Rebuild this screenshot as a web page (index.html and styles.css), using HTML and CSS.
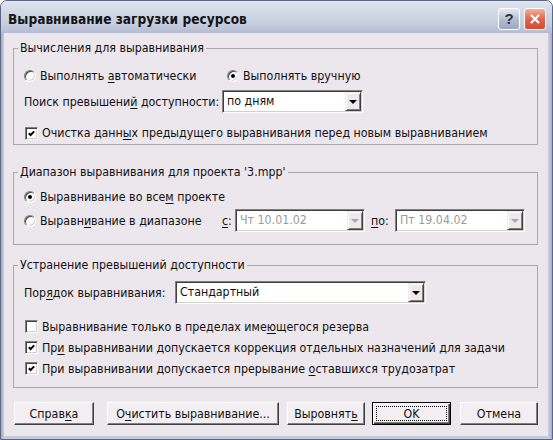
FILE: index.html
```html
<!DOCTYPE html>
<html>
<head>
  <meta charset="utf-8">
  <link rel="stylesheet" href="styles.css">
</head>
<body>
  <div class="window">
    <!-- Caption -->
    <div class="titlebar">
      <span class="title">Выравнивание загрузки ресурсов</span>
      <span class="cap-btn help">?</span>
      <span class="cap-btn close">
        <svg viewBox="0 0 12 12"><path d="M2 2l8 8M10 2l-8 8"/></svg>
      </span>
    </div>

    <div class="client">
      <!-- Calculation mode -->
      <fieldset class="group calc">
        <legend>Вычисления для выравнивания</legend>
        <div class="row line radios">
          <label class="opt opt-auto"><span class="radio"></span><span>Выполнять <u>а</u>втоматически</span></label>
          <label class="opt"><span class="radio on"></span><span>Выполнять в<u>р</u>учную</span></label>
        </div>
        <div class="row field search">
          <span class="lbl lbl-search">Поиск превышени<u>й</u> доступности:</span>
          <div class="combo combo-days">
            <span class="val">по дням</span>
            <span class="drop"><i></i></span>
          </div>
        </div>
        <div class="row line clear">
          <span class="checkbox on"><svg viewBox="0 0 7 7"><path d="M0.8 3.2l1.8 1.8 3.6-3.6"/></svg></span>
          <span>Очистка данн<u>ы</u>х предыдущего выравнивания перед новым выравниванием</span>
        </div>
      </fieldset>

      <!-- Project range -->
      <fieldset class="group range">
        <legend>Диапазон выравнивания для проекта '3.mpp'</legend>
        <div class="row line whole">
          <label class="opt"><span class="radio on"></span><span>Выравнивание во все<u>м</u> проекте</span></label>
        </div>
        <div class="row field dates">
          <label class="opt opt-range"><span class="radio"></span><span>Выравн<u>и</u>вание в диапазоне</span></label>
          <span class="lbl lbl-from"><u>с</u>:</span>
          <div class="combo combo-date disabled">
            <span class="val">Чт 10.01.02</span>
            <span class="drop"><i></i></span>
          </div>
          <span class="lbl lbl-to"><u>п</u>о:</span>
          <div class="combo combo-date disabled">
            <span class="val">Пт 19.04.02</span>
            <span class="drop"><i></i></span>
          </div>
        </div>
      </fieldset>

      <!-- Resolving overallocations -->
      <fieldset class="group resolve">
        <legend>Устранение превышений доступности</legend>
        <div class="row field order">
          <span class="lbl lbl-order">Пор<u>я</u>док выравнивания:</span>
          <div class="combo combo-order">
            <span class="val">Стандартный</span>
            <span class="drop"><i></i></span>
          </div>
        </div>
        <div class="row item first">
          <span class="checkbox"></span>
          <span>Выравнивание только в пределах име<u>ю</u>щегося резерва</span>
        </div>
        <div class="row item">
          <span class="checkbox on"><svg viewBox="0 0 7 7"><path d="M0.8 3.2l1.8 1.8 3.6-3.6"/></svg></span>
          <span>Пр<u>и</u> выравнивании допускается коррекция отдельных назначений для задачи</span>
        </div>
        <div class="row item">
          <span class="checkbox on"><svg viewBox="0 0 7 7"><path d="M0.8 3.2l1.8 1.8 3.6-3.6"/></svg></span>
          <span>При выравнивании допускается прерывание <u>о</u>ставшихся трудозатрат</span>
        </div>
      </fieldset>

      <div class="buttons">
        <button class="btn btn-help">Справ<u>к</u>а</button>
        <button class="btn btn-clear">О<u>ч</u>истить выравнивание...</button>
        <button class="btn btn-level">Выровнят<u>ь</u></button>
        <button class="btn btn-ok default">OK</button>
        <button class="btn btn-cancel">Отмена</button>
      </div>
    </div>
  </div>
</body>
</html>
```

FILE: styles.css
```css
body {
  margin: 0;
  background: #fff;
  font-family: "DejaVu Sans Condensed", "DejaVu Sans", sans-serif;
  font-size: 12.3px;
  color: #111;
}

u {
  text-underline-offset: 2px;
}

.window {
  width: 553px;
  height: 440px;
  box-sizing: border-box;
  border: 1px solid #5c6684;
  border-radius: 7px 7px 0 0;
  background: linear-gradient(90deg, #a4aec8, #c4cbdd 3px, #c4cbdd calc(100% - 3px), #a4aec8);
  display: flex;
  flex-direction: column;
  overflow: hidden;
}

/* caption bar */
.titlebar {
  height: 32px;
  box-sizing: border-box;
  padding: 3px 6px 0 7px;
  display: flex;
  align-items: center;
  background: linear-gradient(#e0e4ee, #d2d8e6 35%, #c7cee0 70%, #b4bcd2);
}

.title {
  flex: 1;
  font-family: "DejaVu Sans Condensed", "DejaVu Sans", sans-serif;
  font-weight: bold;
  font-size: 13.6px;
  color: #141414;
}

.cap-btn {
  width: 22px;
  height: 22px;
  box-sizing: border-box;
  border: 1px solid #fff;
  border-radius: 3px;
  display: flex;
  align-items: center;
  justify-content: center;
}

.help {
  margin-right: 4px;
  background: linear-gradient(#e4e8f1, #b0b8cc 60%, #9ea7bf);
  font: bold 15px "Liberation Sans", sans-serif;
  color: #2c3142;
}

.close {
  background: linear-gradient(#f2b09c, #e2664e 50%, #cf4c34);
}

.close svg {
  width: 12px;
  height: 12px;
  fill: none;
  stroke: #fff;
  stroke-width: 2.2;
}

/* dialog area */
.client {
  flex: 1;
  margin: 0 4px 3px 3px;
  padding: 7px 10px 0 9px;
  background: #ece6ed;
  display: flex;
  flex-direction: column;
}

.group {
  margin: 0;
  padding: 0 0 0 10px;
  min-width: 0;
  border: 1px solid #aca6b0;
}

.group legend {
  margin-left: -6px;
  padding: 0 2px;
  line-height: 16px;
}

.calc { padding-bottom: 1px; }
.range { margin-top: 19px; padding-bottom: 12px; }
.resolve { margin-top: 12px; padding-bottom: 8px; }

.row {
  display: flex;
  align-items: center;
  white-space: nowrap;
}

.line { height: 20px; }
.field { height: 23px; }
.item { height: 21px; }

.radios { margin-top: 10px; }
.search { margin-top: 4px; }
.clear { margin-top: 10px; }
.whole { margin-top: 7px; }
.dates { margin-top: 2px; }
.order { margin-top: 8px; }
.item.first { margin-top: 12px; }

.opt {
  display: flex;
  align-items: center;
}

.opt-auto { width: 203px; }
.opt-range { width: 198px; }

.lbl-search { width: 198px; }
.lbl-from { width: 13px; }
.lbl-to { width: 24px; margin-left: 6px; }
.lbl-order { width: 151px; }

/* classic 3D radio */
.radio {
  width: 12px;
  height: 12px;
  box-sizing: border-box;
  margin-right: 4px;
  border-radius: 50%;
  border: 1px solid;
  border-color: #808080 #fff #fff #808080;
  box-shadow: inset 1px 1px #404040, inset -1px -1px #d4d0c8;
  background: #fff;
  display: flex;
  align-items: center;
  justify-content: center;
}

.radio.on::after {
  content: "";
  width: 4px;
  height: 4px;
  border-radius: 50%;
  background: #000;
}

/* classic 3D checkbox */
.checkbox {
  width: 13px;
  height: 13px;
  box-sizing: border-box;
  margin: 0 4px 0 1px;
  border: 1px solid;
  border-color: #808080 #fff #fff #808080;
  box-shadow: inset 1px 1px #404040, inset -1px -1px #d4d0c8;
  background: #fff;
  display: flex;
  align-items: center;
  justify-content: center;
}

.checkbox svg {
  width: 7px;
  height: 7px;
  fill: none;
  stroke: #000;
  stroke-width: 2;
}

/* drop-down lists */
.combo {
  height: 23px;
  box-sizing: border-box;
  border: 1px solid;
  border-color: #808080 #fff #fff #808080;
  box-shadow: inset 1px 1px #404040, inset -1px -1px #d4d0c8;
  background: #fff;
  padding: 1px;
  display: flex;
}

.combo .val {
  flex: 1;
  padding-left: 3px;
  line-height: 19px;
}

.combo-days { width: 141px; }
.combo-date { width: 130px; }
.combo-order { width: 251px; }

.drop {
  width: 16px;
  box-sizing: border-box;
  background: #ece8ec;
  border: 1px solid;
  border-color: #ece8ec #404040 #404040 #ece8ec;
  box-shadow: inset 1px 1px #fff, inset -1px -1px #808080;
  display: flex;
  align-items: center;
  justify-content: center;
}

.drop i {
  width: 0;
  height: 0;
  border-left: 4px solid transparent;
  border-right: 4px solid transparent;
  border-top: 4px solid #000;
}

.combo.disabled .val { color: #9a9a9a; }
.combo.disabled .drop i { border-top-color: #a8a8a8; }

/* push buttons */
.buttons {
  display: flex;
  margin-top: 14px;
}

.btn {
  height: 23px;
  box-sizing: border-box;
  padding: 0;
  font: inherit;
  color: #111;
  background: #f2eef2;
  border: 1px solid;
  border-color: #fff #404040 #404040 #fff;
  box-shadow: inset -1px -1px #808080;
}

.btn.default {
  border: 1px solid #000;
  box-shadow: inset 1px 1px #fff, inset -1px -1px #404040, inset -2px -2px #808080;
  outline: 1px dotted #000;
  outline-offset: -5px;
}

.btn-help { width: 80px; margin-left: 1px; }
.btn-clear { width: 172px; margin-left: 13px; }
.btn-level { width: 78px; margin-left: 8px; }
.btn-ok { width: 79px; margin-left: 7px; }
.btn-cancel { width: 78px; margin-left: 9px; }
```
